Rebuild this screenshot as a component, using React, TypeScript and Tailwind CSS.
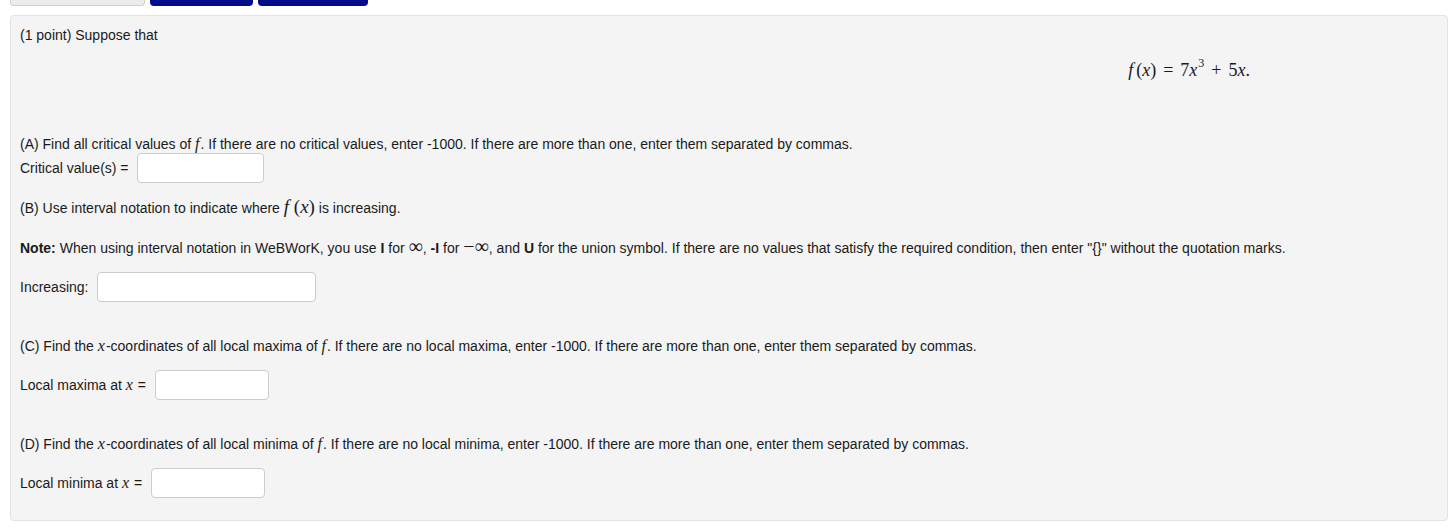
const mathFont = "font-['Liberation_Serif','DejaVu_Serif',serif]";

function V({ children }: { children: string }) {
  return <span className={`${mathFont} italic text-[16px] leading-[0] pr-[1px]`}>{children}</span>;
}

function Field({ label, width }: { label: React.ReactNode; width: string }) {
  return (
    <div className="mt-[15px] flex h-[30px] items-center">
      <span className="leading-[18px]">{label}</span>
      <input
        type="text"
        className={`ml-[9px] h-[30px] ${width} rounded-[4px] border border-[#cccccc] bg-white px-2 outline-none`}
      />
    </div>
  );
}

export default function App() {
  return (
    <main className="min-h-screen bg-white font-['Liberation_Sans',Arial,sans-serif] text-[14px] leading-[18px] text-[#1a1a1a]">
      <div className="flex gap-[5px] pl-[10px]">
        <div className="h-[6px] w-[135px] rounded-b-[4px] border border-t-0 border-[#d0d0d0] bg-[#ececec]" />
        <div className="h-[6px] w-[103px] rounded-b-[4px] bg-[#000c8a]" />
        <div className="h-[6px] w-[110px] rounded-b-[4px] bg-[#000c8a]" />
      </div>

      <section className="mt-[9px] ml-[10px] mr-[1px] rounded-[4px] border border-[#e3e3e3] bg-[#f4f4f4] px-[9px] pt-[10px] pb-[22px]">
        <p className="h-[18px]">(1 point) Suppose that</p>

        <div className={`mt-[16px] flex h-[20px] items-center justify-end pr-[188px] ${mathFont} text-[18px] leading-none`}>
          <span className="italic">f</span>
          <span className="pl-[3px]">(</span>
          <span className="italic">x</span>
          <span>)</span>
          <span className="px-[7px]">=</span>
          <span>7</span>
          <span className="italic">x</span>
          <span className="relative -top-[7px] pl-[1px] text-[12px]">3</span>
          <span className="px-[7px]">+</span>
          <span>5</span>
          <span className="italic">x</span>
          <span>.</span>
        </div>

        <p className="mt-[55px] h-[18px]">
          (A) Find all critical values of <V>f</V>. If there are no critical values, enter -1000. If there are more than
          one, enter them separated by commas.
        </p>
        <div className="flex h-[30px] items-center">
          <span>Critical value(s) =</span>
          <input
            type="text"
            className="ml-[8px] h-[30px] w-[127px] rounded-[4px] border border-[#cccccc] bg-white px-2 outline-none"
          />
        </div>

        <p className="mt-[16px] h-[18px]">
          (B) Use interval notation to indicate where{" "}
          <span className={`${mathFont} text-[19px] leading-[0]`}>
            <span className="italic">f</span> (<span className="italic">x</span>)
          </span>{" "}
          is increasing.
        </p>

        <p className="mt-[22px] h-[18px]">
          <b>Note:</b> When using interval notation in WeBWorK, you use <b>I</b> for{" "}
          <span className={`${mathFont} text-[20px] leading-[0]`}>∞</span>, <b>-I</b> for{" "}
          <span className={`${mathFont} text-[20px] leading-[0]`}>−∞</span>, and <b>U</b> for the union symbol. If there
          are no values that satisfy the required condition, then enter "{"{}"}" without the quotation marks.
        </p>

        <Field label="Increasing:" width="w-[219px]" />

        <p className="mt-[35px] h-[18px]">
          (C) Find the <V>x</V>-coordinates of all local maxima of <V>f</V>. If there are no local maxima, enter -1000.
          If there are more than one, enter them separated by commas.
        </p>
        <Field
          label={
            <>
              Local maxima at <V>x</V> =
            </>
          }
          width="w-[114px]"
        />

        <p className="mt-[35px] h-[18px]">
          (D) Find the <V>x</V>-coordinates of all local minima of <V>f</V>. If there are no local minima, enter -1000.
          If there are more than one, enter them separated by commas.
        </p>
        <Field
          label={
            <>
              Local minima at <V>x</V> =
            </>
          }
          width="w-[114px]"
        />
      </section>
    </main>
  );
}
